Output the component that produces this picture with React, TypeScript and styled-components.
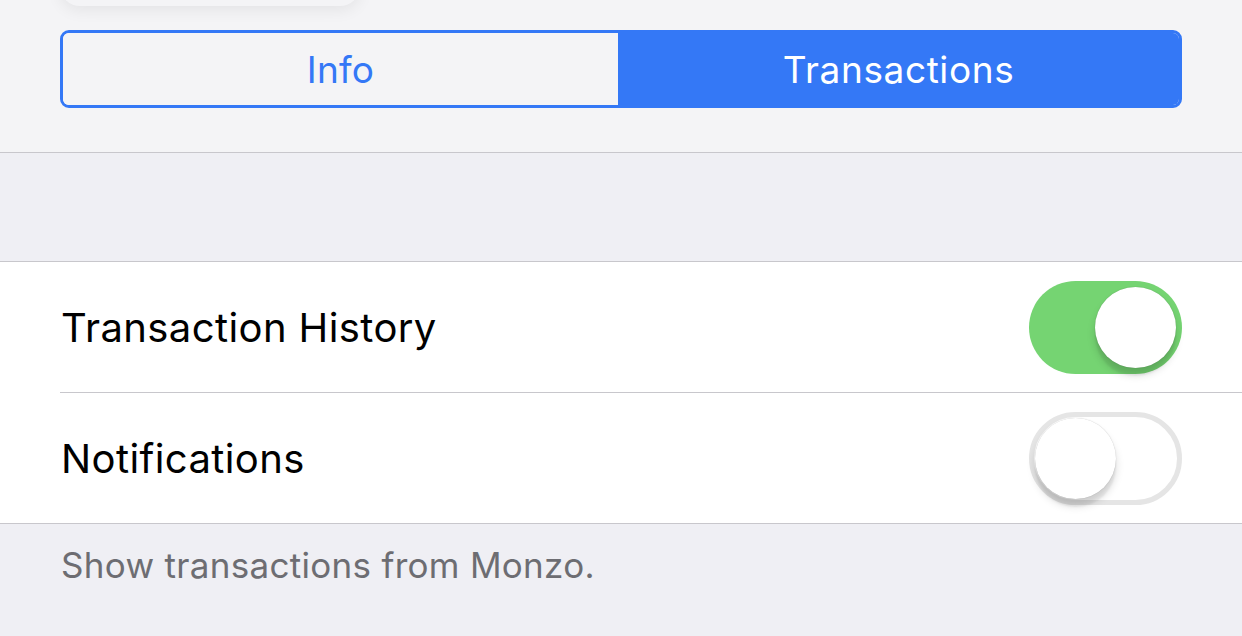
import React from 'react';
import styled, { createGlobalStyle } from 'styled-components';

const GlobalStyle = createGlobalStyle`
  html, body {
    margin: 0;
    padding: 0;
    background: #efeff4;
    font-family: 'Inter', 'Noto Sans', sans-serif;
    -webkit-font-smoothing: antialiased;
  }
`;

const Page = styled.div`
  width: 1242px;
  height: 636px;
  overflow: hidden;
  background: #efeff4;
`;

const Header = styled.div`
  height: 153px;
  box-sizing: border-box;
  background: #f4f4f6;
  border-bottom: 1px solid #c8c7cc;
  padding: 0 60px;
  display: flex;
  flex-direction: column;
`;

const TopCard = styled.div`
  width: 300px;
  height: 40px;
  margin-top: -34px;
  border-radius: 22px;
  background: #f4f4f6;
  box-shadow: 0 4px 16px rgba(0, 0, 0, 0.07);
`;

const Segmented = styled.div`
  margin-top: 24px;
  height: 78px;
  box-sizing: border-box;
  border: 3px solid #3478f6;
  border-radius: 9px;
  display: grid;
  grid-template-columns: 555px 1fr;
  overflow: hidden;
`;

const Segment = styled.div<{ $active?: boolean }>`
  display: flex;
  align-items: center;
  justify-content: center;
  font-size: 37px;
  letter-spacing: ${p => (p.$active ? '0.6px' : '0.2px')};
  color: ${p => (p.$active ? '#ffffff' : '#3478f6')};
  background: ${p => (p.$active ? '#3478f6' : '#f4f4f6')};
`;

const Spacer = styled.div`
  height: 108px;
`;

const Group = styled.div`
  background: #ffffff;
  border-top: 1px solid #c8c7cc;
  border-bottom: 1px solid #c8c7cc;
`;

const Row = styled.div<{ $divider?: boolean }>`
  height: 130px;
  margin-left: 60px;
  padding-right: 60px;
  display: flex;
  align-items: center;
  justify-content: space-between;
  border-bottom: ${p => (p.$divider ? '1px solid #c8c7cc' : 'none')};
`;

const Label = styled.div`
  font-size: 40px;
  letter-spacing: 0.4px;
  color: #000000;
  padding-left: 1px;
`;

const Switch = styled.div<{ $on?: boolean }>`
  position: relative;
  width: 153px;
  height: 93px;
  box-sizing: border-box;
  border-radius: 47px;
  background: ${p => (p.$on ? '#75d472' : '#ffffff')};
  border: ${p => (p.$on ? 'none' : '5px solid #e5e5e5')};
`;

const Knob = styled.div<{ $on?: boolean }>`
  position: absolute;
  top: ${p => (p.$on ? '6px' : '1px')};
  left: ${p => (p.$on ? '66px' : '1px')};
  width: 81px;
  height: 81px;
  border-radius: 50%;
  background: #ffffff;
  box-shadow: 0 7px 8px rgba(0, 0, 0, 0.15), 0 0 1px rgba(0, 0, 0, 0.25),
    0 8px 2px rgba(0, 0, 0, 0.06);
`;

const Footer = styled.div`
  padding: 20px 0 0 61px;
  font-size: 35px;
  letter-spacing: 0.3px;
  color: #6d6d72;
`;

const Toggle: React.FC<{ on?: boolean }> = ({ on }) => (
  <Switch $on={on}>
    <Knob $on={on} />
  </Switch>
);

export default function App() {
  return (
    <Page>
      <GlobalStyle />
      <Header>
        <TopCard />
        <Segmented>
          <Segment>Info</Segment>
          <Segment $active>Transactions</Segment>
        </Segmented>
      </Header>
      <Spacer />
      <Group>
        <Row $divider>
          <Label>Transaction History</Label>
          <Toggle on />
        </Row>
        <Row>
          <Label>Notifications</Label>
          <Toggle />
        </Row>
      </Group>
      <Footer>Show transactions from Monzo.</Footer>
    </Page>
  );
}
